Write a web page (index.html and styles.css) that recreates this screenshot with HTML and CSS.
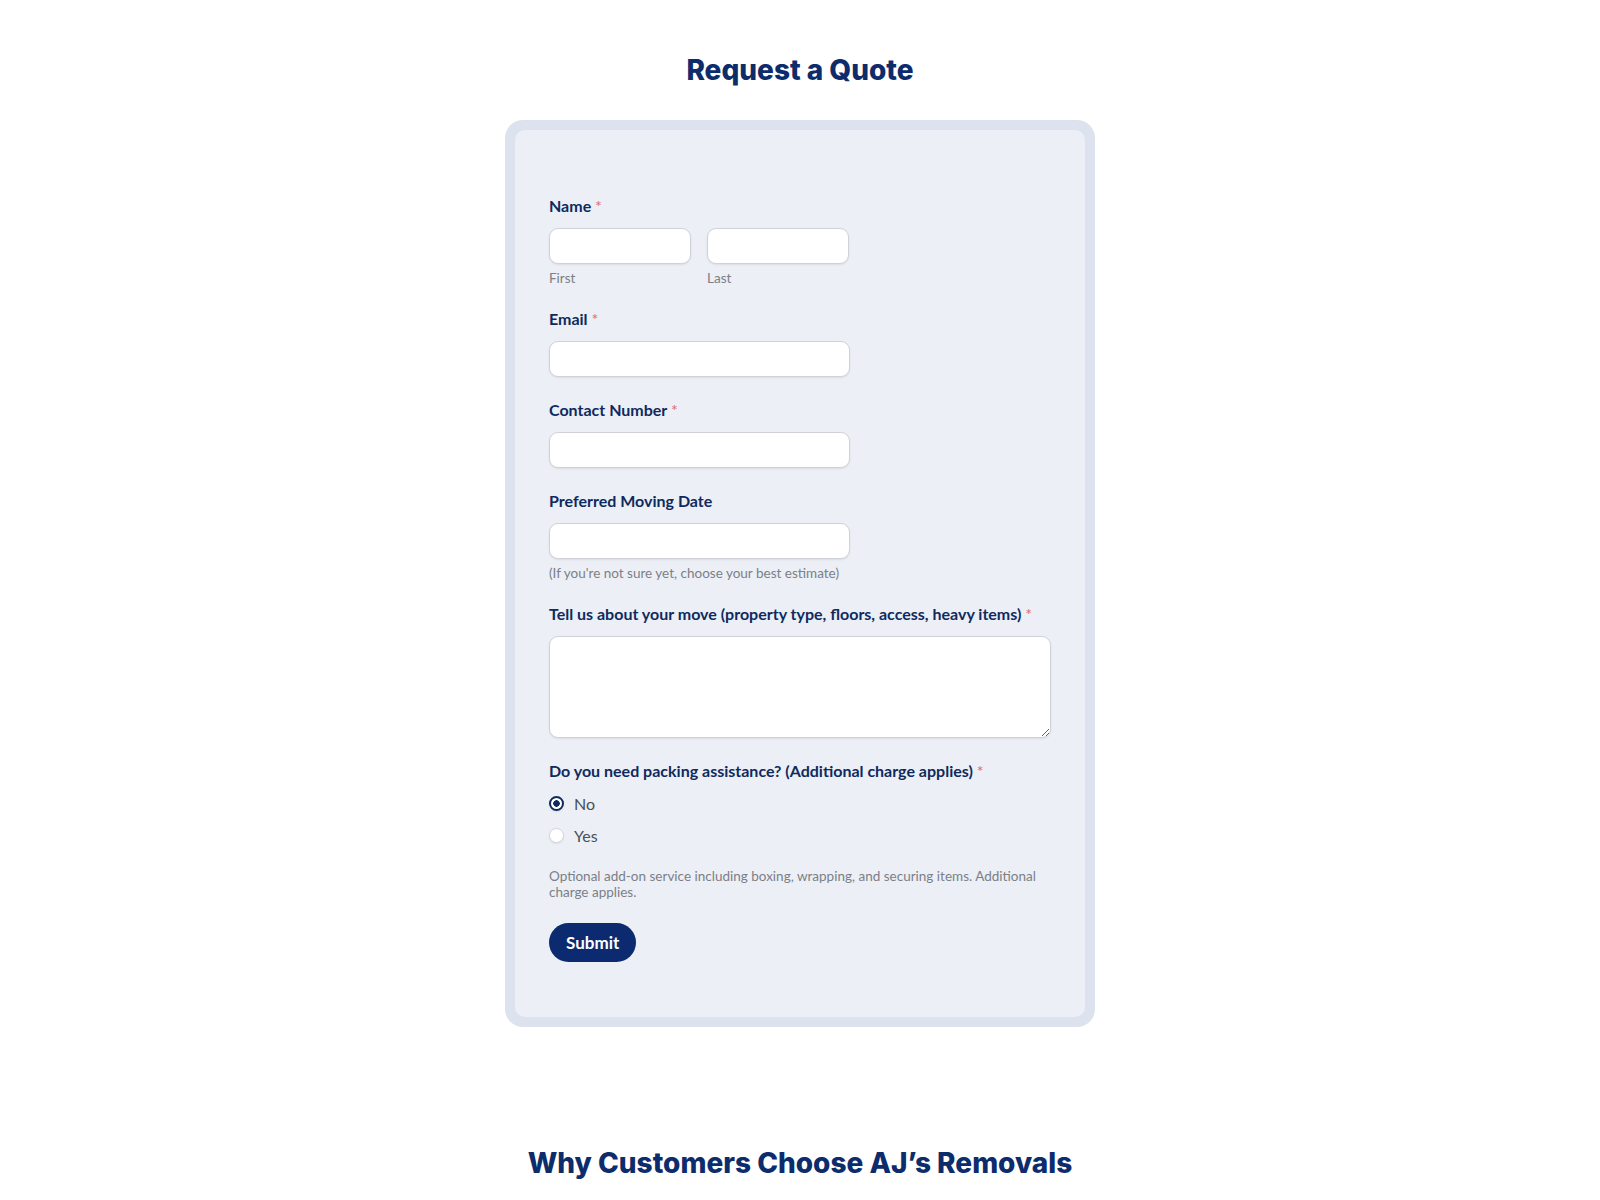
FILE: index.html
```html
<!DOCTYPE html>
<html lang="en">

<head>
    <meta charset="UTF-8">
    <meta name="viewport" content="width=device-width, initial-scale=1.0">
    <title>Request a Quote - AJ's Removals</title>
    <link rel="stylesheet" href="styles.css">
</head>

<body>
    <section class="quote">
        <h2 class="section-title">Request a Quote</h2>

        <div class="form-frame">
            <form class="quote-form" onsubmit="return false;">
                <!-- Name -->
                <div class="field">
                    <label class="field-label">Name <span class="req">*</span></label>
                    <div class="name-row">
                        <div class="name-part">
                            <input type="text" class="input input-short">
                            <span class="sublabel">First</span>
                        </div>
                        <div class="name-part">
                            <input type="text" class="input input-short">
                            <span class="sublabel">Last</span>
                        </div>
                    </div>
                </div>

                <!-- Email -->
                <div class="field">
                    <label class="field-label">Email <span class="req">*</span></label>
                    <input type="email" class="input input-medium">
                </div>

                <!-- Phone -->
                <div class="field">
                    <label class="field-label">Contact Number <span class="req">*</span></label>
                    <input type="tel" class="input input-medium">
                </div>

                <!-- Moving date -->
                <div class="field">
                    <label class="field-label">Preferred Moving Date</label>
                    <input type="text" class="input input-medium">
                    <p class="hint">(If you're not sure yet, choose your best estimate)</p>
                </div>

                <!-- Details -->
                <div class="field">
                    <label class="field-label">Tell us about your move (property type, floors, access, heavy items) <span class="req">*</span></label>
                    <textarea class="input textarea"></textarea>
                </div>

                <!-- Packing -->
                <div class="field">
                    <label class="field-label">Do you need packing assistance? (Additional charge applies) <span class="req">*</span></label>
                    <div class="choices">
                        <label class="choice"><input type="radio" name="packing" checked> No</label>
                        <label class="choice"><input type="radio" name="packing"> Yes</label>
                    </div>
                    <p class="hint hint-long">Optional add-on service including boxing, wrapping, and securing items. Additional charge applies.</p>
                </div>

                <button type="submit" class="submit-btn">Submit</button>
            </form>
        </div>
    </section>

    <section class="why">
        <h2 class="section-title">Why Customers Choose AJ’s Removals</h2>
    </section>
</body>

</html>
```

FILE: styles.css
```css
body {
    font-family: Lato, "Open Sans", sans-serif;
    margin: 0;
    padding: 0;
    background: #fff;
    color: #333;
}

.section-title {
    font-family: Inter, "Noto Sans", sans-serif;
    font-weight: 800;
    font-size: 28px;
    color: #0d2c6c;
    text-align: center;
    margin: 0;
}

.quote {
    padding-top: 53px;
}

.form-frame {
    width: 570px;
    margin: 33px auto 0;
    padding: 10px;
    background: #dde3ee;
    border-radius: 18px;
}

.quote-form {
    background: #eceff5;
    border-radius: 10px;
    padding: 66px 34px 55px;
}

.field {
    margin-bottom: 23px;
}

.field-label {
    display: block;
    font-weight: bold;
    font-size: 16px;
    line-height: 20px;
    color: #0f2a5e;
    margin-bottom: 12px;
}

.req {
    color: #e06a6a;
    font-weight: normal;
}

.name-row {
    display: flex;
    gap: 16px;
}

.name-part {
    display: flex;
    flex-direction: column;
}

.input {
    display: block;
    box-sizing: border-box;
    height: 36px;
    background: #fff;
    border: 1px solid #cfd2d8;
    border-radius: 9px;
    box-shadow: 0 1px 2px rgba(0, 0, 0, 0.08);
    font-family: inherit;
    font-size: 14px;
    padding: 6px 10px;
}

.input-short {
    width: 142px;
}

.input-medium {
    width: 301px;
}

.textarea {
    width: 100%;
    height: 102px;
    resize: vertical;
}

.sublabel {
    font-size: 13.5px;
    line-height: 16px;
    color: #7b7f87;
    margin-top: 6px;
}

.hint {
    font-size: 13.5px;
    line-height: 16px;
    color: #7b7f87;
    margin: 6px 0 0;
}

.hint-long {
    margin-top: 22px;
}

.choices {
    display: flex;
    flex-direction: column;
    gap: 11px;
}

.choice {
    display: flex;
    align-items: center;
    gap: 10px;
    font-size: 16px;
    line-height: 21px;
    color: #4a4f58;
}

.choice input {
    appearance: none;
    width: 15px;
    height: 15px;
    margin: 0;
    border: 1px solid #d3d6dc;
    border-radius: 50%;
    background: #fff;
    box-shadow: 0 1px 2px rgba(0, 0, 0, 0.08);
}

.choice input:checked {
    border: 2px solid #0f2a5e;
    background: radial-gradient(circle, #0f2a5e 0 3px, #fff 3.5px);
}

.submit-btn {
    font-family: inherit;
    font-weight: bold;
    font-size: 17px;
    color: #fff;
    background: #0b2a70;
    border: none;
    border-radius: 20px;
    height: 39px;
    padding: 0 17px;
    cursor: pointer;
}

.why {
    padding-top: 119px;
}
```
